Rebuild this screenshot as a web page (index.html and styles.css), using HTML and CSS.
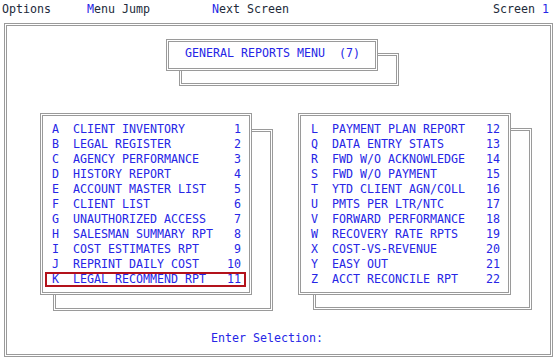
FILE: index.html
```html
<!DOCTYPE html>
<html lang="en">
<head>
  <meta charset="UTF-8" />
  <meta name="viewport" content="width=device-width, initial-scale=1.0"/>
  <title>General Reports Menu</title>
  <link rel="stylesheet" href="styles.css">
</head>
<body>

  <div class="menubar">
    <span class="item">Options</span>
    <span class="item jump"><span class="hot">M</span>enu Jump</span>
    <span class="item next"><span class="hot">N</span>ext Screen</span>
    <span class="item screen-no">Screen <span class="hot">1</span></span>
  </div>

  <div class="screen">
    <div class="title">GENERAL REPORTS MENU  (7)</div>

    <div class="panels">
      <div class="panel">
        <div class="row"><span class="key">A</span><span class="name">CLIENT INVENTORY</span><span class="num">1</span></div>
        <div class="row"><span class="key">B</span><span class="name">LEGAL REGISTER</span><span class="num">2</span></div>
        <div class="row"><span class="key">C</span><span class="name">AGENCY PERFORMANCE</span><span class="num">3</span></div>
        <div class="row"><span class="key">D</span><span class="name">HISTORY REPORT</span><span class="num">4</span></div>
        <div class="row"><span class="key">E</span><span class="name">ACCOUNT MASTER LIST</span><span class="num">5</span></div>
        <div class="row"><span class="key">F</span><span class="name">CLIENT LIST</span><span class="num">6</span></div>
        <div class="row"><span class="key">G</span><span class="name">UNAUTHORIZED ACCESS</span><span class="num">7</span></div>
        <div class="row"><span class="key">H</span><span class="name">SALESMAN SUMMARY RPT</span><span class="num">8</span></div>
        <div class="row"><span class="key">I</span><span class="name">COST ESTIMATES RPT</span><span class="num">9</span></div>
        <div class="row"><span class="key">J</span><span class="name">REPRINT DAILY COST</span><span class="num">10</span></div>
        <div class="row sel"><span class="key">K</span><span class="name">LEGAL RECOMMEND RPT</span><span class="num">11</span></div>
      </div>

      <div class="panel panel-right">
        <div class="row"><span class="key">L</span><span class="name">PAYMENT PLAN REPORT</span><span class="num">12</span></div>
        <div class="row"><span class="key">Q</span><span class="name">DATA ENTRY STATS</span><span class="num">13</span></div>
        <div class="row"><span class="key">R</span><span class="name">FWD W/O ACKNOWLEDGE</span><span class="num">14</span></div>
        <div class="row"><span class="key">S</span><span class="name">FWD W/O PAYMENT</span><span class="num">15</span></div>
        <div class="row"><span class="key">T</span><span class="name">YTD CLIENT AGN/COLL</span><span class="num">16</span></div>
        <div class="row"><span class="key">U</span><span class="name">PMTS PER LTR/NTC</span><span class="num">17</span></div>
        <div class="row"><span class="key">V</span><span class="name">FORWARD PERFORMANCE</span><span class="num">18</span></div>
        <div class="row"><span class="key">W</span><span class="name">RECOVERY RATE RPTS</span><span class="num">19</span></div>
        <div class="row"><span class="key">X</span><span class="name">COST-VS-REVENUE</span><span class="num">20</span></div>
        <div class="row"><span class="key">Y</span><span class="name">EASY OUT</span><span class="num">21</span></div>
        <div class="row"><span class="key">Z</span><span class="name">ACCT RECONCILE RPT</span><span class="num">22</span></div>
      </div>
    </div>

    <div class="prompt">Enter Selection:</div>
  </div>

</body>
</html>
```

FILE: styles.css
```css
body {
  margin: 0;
  padding: 0;
  font-family: "DejaVu Sans Mono", "Liberation Mono", monospace;
  font-size: 11.63px;
  line-height: 15px;
  color: #222a3a;
  background-color: #fff;
}
.menubar {
  display: flex;
  height: 23px;
  box-sizing: border-box;
  padding: 2px 8px 0 2px;
  white-space: pre;
}
.jump {
  margin-left: 36px;
}
.next {
  margin-left: 62px;
}
.screen-no {
  margin-left: auto;
}
.hot {
  color: #2626e6;
}
.screen {
  isolation: isolate;
  margin-left: 4px;
  width: 549px;
  height: 334px;
  box-sizing: border-box;
  border: 3px double #9a9a9a;
  padding-top: 13px;
  color: #2626e6;
}
.title {
  position: relative;
  margin-left: 159px;
  width: 212px;
  box-sizing: border-box;
  border: 3px double #9a9a9a;
  padding: 4px 0 7px 16px;
  background-color: #fff;
  white-space: pre;
}
.title::before,
.panel::before {
  content: "";
  position: absolute;
  z-index: -1;
  box-sizing: border-box;
  border: 3px double #9a9a9a;
}
.title::before {
  left: 10px;
  top: 11px;
  width: 220px;
  height: 33px;
}
.panels {
  display: flex;
  gap: 46px;
  margin: 42px 0 0 33px;
}
.panel {
  position: relative;
  width: 212px;
  height: 182px;
  box-sizing: border-box;
  border: 3px double #9a9a9a;
  padding: 6px 8px 0 9px;
  background-color: #fff;
}
.panel::before {
  left: 10px;
  top: 13px;
  width: 220px;
  height: 182px;
}
.panel-right {
  width: 213px;
  padding-left: 10px;
}
.panel-right::before {
  left: 12px;
  top: 12px;
  width: 219px;
}
.row {
  display: flex;
  height: 15px;
  white-space: pre;
}
.key {
  width: 21px;
}
.name {
  flex: 1;
}
.num {
  text-align: right;
}
.row.sel {
  margin: 0 -5px 0 -7px;
  padding: 0 5px 0 7px;
  box-shadow: inset 0 0 0 2px #b3121b;
}
.prompt {
  margin-top: 36px;
  padding-left: 204px;
}
```
